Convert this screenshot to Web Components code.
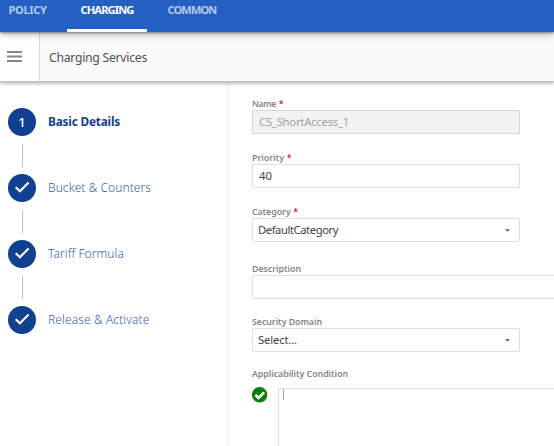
<!DOCTYPE html>
<html lang="en"><head><meta charset="utf-8"><title>Charging Services</title>
<style>
html,body{margin:0;height:100%;overflow:hidden;background:#fff;font-family:"Noto Sans","Open Sans",sans-serif;font-size:12px;color:#444}
</style></head><body>
<charging-app></charging-app>
<script>
const define=(name,html,extra)=>customElements.define(name,class extends HTMLElement{
  connectedCallback(){
    if(this.shadowRoot)return;
    this.attachShadow({mode:'open'}).innerHTML=html;
    if(extra)extra(this,this.shadowRoot);
  }
});

/* Text run tracked to occupy the width given in its "w" attribute. */
define('tracked-text',`<style>:host{display:inline-block;white-space:nowrap}span{display:inline-block}</style><span><slot></slot></span>`,(el,root)=>{
  const s=root.querySelector('span'),n=el.textContent.length,w=+el.getAttribute('w');
  s.style.letterSpacing=((w-s.getBoundingClientRect().width)/n)+'px';
});

define('nav-tab',`<style>
:host{display:block;box-sizing:border-box;height:32px;padding:0 13.5px;border-bottom:3px solid transparent;color:#b4c9ec;font:700 11.1px/19px "Noto Sans",sans-serif}
:host([active]){color:#fff;border-color:#fff}
</style><slot></slot>`);

define('top-nav',`<style>
:host{display:flex;gap:7px;height:32px;background:#2360c2;box-shadow:0 1px 8px rgba(0,0,0,.4),0 1px 2px rgba(0,0,0,.35);position:relative;z-index:2}
nav-tab:first-of-type{padding-left:8.5px}
</style><nav-tab><tracked-text w="38">POLICY</tracked-text></nav-tab><nav-tab active><tracked-text w="53">CHARGING</tracked-text></nav-tab><nav-tab><tracked-text w="49">COMMON</tracked-text></nav-tab>`);

define('title-bar',`<style>
:host{display:flex;height:49px;background:#fafafa;box-shadow:0 1px 0 #c2c2c2,0 2px 4px rgba(0,0,0,.38);position:relative;z-index:1}
.menu{width:32px;background:#fff;border-right:1px solid #d8d8d8;display:flex;align-items:center;padding-left:7px}
h1{margin:0 0 0 9px;font:400 12.2px/51px "Noto Sans",sans-serif;color:#505050}
</style><div class="menu"><svg width="15" height="11"><path d="M0 1h15M0 5.5h15M0 10h15" stroke="#858585" stroke-width="2"/></svg></div><h1><tracked-text w="98">Charging Services</tracked-text></h1>`);

define('wizard-step',`<style>
:host{display:grid;grid-template-columns:28px auto;column-gap:12px;height:66px;grid-template-rows:28px 1fr;color:#3460b0;font-size:12px;line-height:27px;font-weight:350;justify-content:start}
:host([current]){color:#123f92;font-weight:700;font-size:11.8px}
.dot{width:28px;height:28px;border-radius:50%;background:#10408f;color:#fff;display:grid;place-items:center;font-size:13px}
:host([current]) svg{display:none}:host(:not([current])) b{display:none}
b{font-weight:500}
i{justify-self:center;width:1px;height:23px;margin-top:8px;background:#c4c4c4}
:host([last]) i{display:none}
</style><div class="dot"><b>1</b><svg width="28" height="28"><path d="M7.7 13.2l4.2 4L20.6 8.5" fill="none" stroke="#fff" stroke-width="2.1"/></svg></div><div><slot></slot></div><i></i>`);

define('wizard-steps',`<style>
:host{display:block;box-sizing:border-box;width:229px;border-right:1px solid #eee;padding:27.3px 0 0 8px}
</style><wizard-step current><tracked-text w="72">Basic Details</tracked-text></wizard-step><wizard-step><tracked-text w="103">Bucket &amp; Counters</tracked-text></wizard-step><wizard-step><tracked-text w="76">Tariff Formula</tracked-text></wizard-step><wizard-step last><tracked-text w="101.5">Release &amp; Activate</tracked-text></wizard-step>`);

define('form-field',`<style>
:host{display:block}
.l{display:flex;gap:3px;height:12px;font:600 8.8px/12px "Noto Sans",sans-serif;color:#858585}
em{display:none;color:#e01818;font:700 8px/11px "Noto Sans",sans-serif}
:host([required]) em{display:block}
.box{box-sizing:border-box;width:268px;height:24px;border:1px solid #dedede;border-radius:1px;padding:0 9px 0 6px;background:#fff;display:flex;justify-content:space-between;align-items:center;font-size:11.3px;line-height:22px;color:#444}
:host([wide]) .box{width:320px}
:host([disabled]) .box{background:#f2f2f2;border-color:#d5d5d5;color:#a3a3a3}
:host([select]) .box{padding-left:5px;line-height:26px}
svg{display:none}:host([select]) svg{display:block}
</style><div class="l"><slot name="label"></slot><em>*</em></div><div class="box"><slot></slot><svg width="5" height="3"><path d="M0 0h5L2.5 3z" fill="#777"/></svg></div>`);

define('condition-editor',`<style>
:host{display:block}
.l{font:600 8.8px/12px "Noto Sans",sans-serif;color:#858585;height:12px}
.row{display:flex;margin-top:8px;gap:10px}
.ok{display:block;flex:none;margin-top:-1px}
.area{flex:none;width:300px;height:90px;border:1px solid #dedede;box-sizing:border-box;padding:0 4px}
.caret{width:1px;height:11px;background:#aaa}
</style><div class="l"><slot></slot></div><div class="row"><svg class="ok" width="16" height="16"><circle cx="7.6" cy="7.8" r="7.7" fill="#078009"/><path d="M3.3 7.9l3.2 3.1 5.6-5.7" fill="none" stroke="#fff" stroke-width="2.6"/></svg><div class="area"><div class="caret"></div></div></div>`);

define('service-form',`<style>
:host{display:flex;flex-direction:column;padding:17px 0 0 23px;gap:18px;flex:1;overflow:hidden}
.desc{margin-top:3px}.sec{margin-top:-1px}condition-editor{margin-top:-2px}
</style>
<form-field required disabled><tracked-text slot="label" w="24">Name</tracked-text><tracked-text w="90">CS_ShortAccess_1</tracked-text></form-field>
<form-field required><tracked-text slot="label" w="32">Priority</tracked-text><tracked-text w="13">40</tracked-text></form-field>
<form-field required select><tracked-text slot="label" w="38.5">Category</tracked-text><tracked-text w="80">DefaultCategory</tracked-text></form-field>
<form-field wide class="desc"><tracked-text slot="label" w="49">Description</tracked-text></form-field>
<form-field select class="sec"><tracked-text slot="label" w="70">Security Domain</tracked-text><tracked-text w="39">Select...</tracked-text></form-field>
<condition-editor><tracked-text w="96">Applicability Condition</tracked-text></condition-editor>`);

define('charging-app',`<style>
:host{display:flex;flex-direction:column;height:100vh;overflow:hidden}
main{display:flex;flex:1;min-height:0}
</style><top-nav></top-nav><title-bar></title-bar><main><wizard-steps></wizard-steps><service-form></service-form></main>`);
</script></body></html>
